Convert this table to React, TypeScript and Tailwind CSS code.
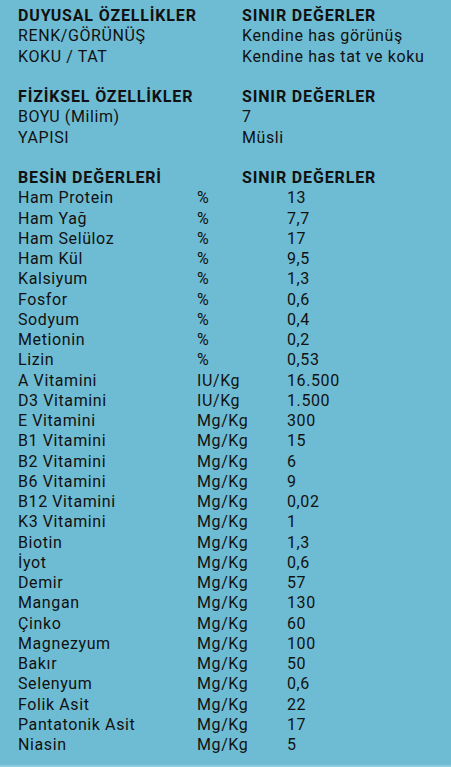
const sensory = [
  ["RENK/GÖRÜNÜŞ", "Kendine has görünüş"],
  ["KOKU / TAT", "Kendine has tat ve koku"],
];

const physical = [
  ["BOYU (Milim)", "7"],
  ["YAPISI", "Müsli"],
];

const nutrients = [
  ["Ham Protein", "%", "13"],
  ["Ham Yağ", "%", "7,7"],
  ["Ham Selüloz", "%", "17"],
  ["Ham Kül", "%", "9,5"],
  ["Kalsiyum", "%", "1,3"],
  ["Fosfor", "%", "0,6"],
  ["Sodyum", "%", "0,4"],
  ["Metionin", "%", "0,2"],
  ["Lizin", "%", "0,53"],
  ["A Vitamini", "IU/Kg", "16.500"],
  ["D3 Vitamini", "IU/Kg", "1.500"],
  ["E Vitamini", "Mg/Kg", "300"],
  ["B1 Vitamini", "Mg/Kg", "15"],
  ["B2 Vitamini", "Mg/Kg", "6"],
  ["B6 Vitamini", "Mg/Kg", "9"],
  ["B12 Vitamini", "Mg/Kg", "0,02"],
  ["K3 Vitamini", "Mg/Kg", "1"],
  ["Biotin", "Mg/Kg", "1,3"],
  ["İyot", "Mg/Kg", "0,6"],
  ["Demir", "Mg/Kg", "57"],
  ["Mangan", "Mg/Kg", "130"],
  ["Çinko", "Mg/Kg", "60"],
  ["Magnezyum", "Mg/Kg", "100"],
  ["Bakır", "Mg/Kg", "50"],
  ["Selenyum", "Mg/Kg", "0,6"],
  ["Folik Asit", "Mg/Kg", "22"],
  ["Pantatonik Asit", "Mg/Kg", "17"],
  ["Niasin", "Mg/Kg", "5"],
];

function TwoColSection({ title, rows }: { title: string; rows: string[][] }) {
  return (
    <div className="mb-[20.25px]">
      <div className="grid grid-cols-[224px_1fr] font-bold tracking-[0.85px]">
        <span>{title}</span>
        <span>SINIR DEĞERLER</span>
      </div>
      {rows.map(([label, value]) => (
        <div key={label} className="grid grid-cols-[224px_1fr]">
          <span>{label}</span>
          <span>{value}</span>
        </div>
      ))}
    </div>
  );
}

export default function App() {
  return (
    <div className="w-[451px] h-[767px] bg-[#6ebcd3] border-b-2 border-[#8ccbdd] overflow-hidden">
      <div className="pl-[18px] pt-[6px] text-[16px] leading-[20.25px] tracking-[0.6px] text-[#111] font-['Roboto',sans-serif]">
        <TwoColSection title="DUYUSAL ÖZELLİKLER" rows={sensory} />
        <TwoColSection title="FİZİKSEL ÖZELLİKLER" rows={physical} />

        {/* Nutrient table */}
        <div className="grid grid-cols-[224px_1fr] font-bold tracking-[0.85px]">
          <span>BESİN DEĞERLERİ</span>
          <span>SINIR DEĞERLER</span>
        </div>
        {nutrients.map(([label, unit, value]) => (
          <div key={label} className="grid grid-cols-[179px_90px_1fr]">
            <span>{label}</span>
            <span>{unit}</span>
            <span>{value}</span>
          </div>
        ))}
      </div>
    </div>
  );
}
